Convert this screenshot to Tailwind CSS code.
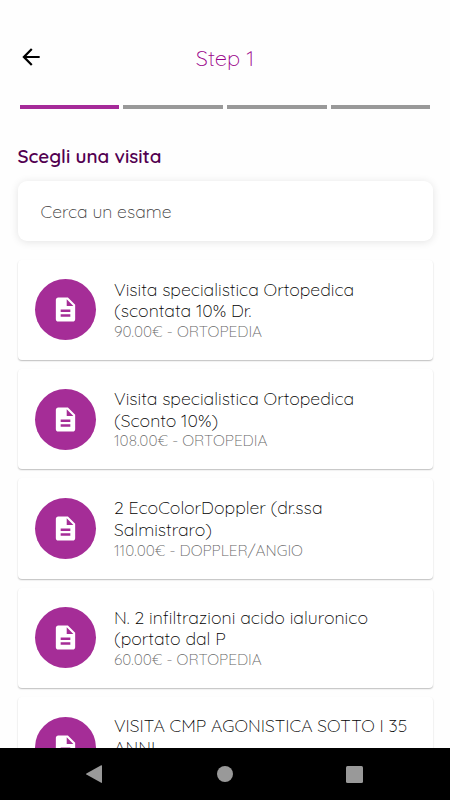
<!DOCTYPE html>
<html lang="it">
<head>
<meta charset="utf-8">
<meta name="viewport" content="width=device-width, initial-scale=1">
<title>Step 1</title>
<script src="https://cdn.jsdelivr.net/npm/@tailwindcss/browser@4"></script>
</head>
<body class="h-[800px] w-[450px] overflow-hidden bg-[#fefefe] font-['Quicksand','Inter',sans-serif] font-light text-black">
<svg class="hidden">
  <symbol id="doc" viewBox="0 0 24 24"><path fill="currentColor" d="M14 2H6c-1.100 0-1.990.9-1.990 2L4 20c0 1.100.89 2 1.990 2H18c1.100 0 2-.9 2-2V8l-6-6zm2 16H8v-2h8v2zm0-4H8v-2h8v2zm-3-5V3.500L18.500 9H13z"/></symbol>
</svg>
<div class="flex h-full flex-col">
  <header class="mt-9 grid h-[42px] shrink-0 grid-cols-[60px_1fr_60px] items-center">
    <svg class="ml-[17.500px] size-[26px]" viewBox="0 0 24 24"><path d="M20 11H7.830l5.590-5.590L12 4l-8 8 8 8 1.410-1.410L7.830 13H20v-2z"/></svg>
    <h1 class="pt-0.5 text-center text-[22px] text-[#990089]">Step 1</h1>
  </header>
  <div class="mt-[27px] grid shrink-0 grid-cols-4 gap-1 px-[19.700px]">
    <div class="h-[4px] bg-[#a52a99]"></div>
    <div class="h-[4px] bg-[#999]"></div>
    <div class="h-[4px] bg-[#999]"></div>
    <div class="h-[4px] bg-[#999]"></div>
  </div>
  <main class="flex min-h-0 flex-1 flex-col overflow-hidden px-[17.500px] pt-[35px]">
    <h2 class="h-6 shrink-0 text-[18.850px] leading-6 font-semibold text-[#520050]">Scegli una visita</h2>
    <div class="mt-[13px] flex h-[60px] shrink-0 items-center rounded-[9px] bg-white px-[23px] text-[17.600px] text-[#3a3a3a] shadow-[0_1px_8px_rgba(0,0,0,0.11)]"><span>Cerca un esame</span></div>
    <ul class="mt-[18.500px] flex flex-col gap-[9px]">
      <li class="flex h-[100.400px] shrink-0 items-center gap-[18px] rounded-[4px] bg-white pl-[17.500px] shadow-[0_1px_1.500px_rgba(0,0,0,0.26)]">
        <div class="flex size-[61px] items-center justify-center rounded-full bg-[#a52d97] text-white"><svg class="size-[29px]"><use href="#doc"/></svg></div>
        <div class="pt-px text-[17.700px] leading-[21.600px] whitespace-nowrap">
          <p>Visita specialistica Ortopedica</p>
          <p>(scontata 10% Dr.</p>
          <p class="text-[15.400px] leading-5 text-[#666]">90.00€ - ORTOPEDIA</p>
        </div>
      </li>
      <li class="flex h-[100.400px] shrink-0 items-center gap-[18px] rounded-[4px] bg-white pl-[17.500px] shadow-[0_1px_1.500px_rgba(0,0,0,0.26)]">
        <div class="flex size-[61px] items-center justify-center rounded-full bg-[#a52d97] text-white"><svg class="size-[29px]"><use href="#doc"/></svg></div>
        <div class="pt-px text-[17.700px] leading-[21.600px] whitespace-nowrap">
          <p>Visita specialistica Ortopedica</p>
          <p>(Sconto 10%)</p>
          <p class="text-[15.400px] leading-5 text-[#666]">108.00€ - ORTOPEDIA</p>
        </div>
      </li>
      <li class="flex h-[100.400px] shrink-0 items-center gap-[18px] rounded-[4px] bg-white pl-[17.500px] shadow-[0_1px_1.500px_rgba(0,0,0,0.26)]">
        <div class="flex size-[61px] items-center justify-center rounded-full bg-[#a52d97] text-white"><svg class="size-[29px]"><use href="#doc"/></svg></div>
        <div class="pt-px text-[17.700px] leading-[21.600px] whitespace-nowrap">
          <p>2 EcoColorDoppler (dr.ssa</p>
          <p>Salmistraro)</p>
          <p class="text-[15.400px] leading-5 text-[#666]">110.00€ - DOPPLER/ANGIO</p>
        </div>
      </li>
      <li class="flex h-[100.400px] shrink-0 items-center gap-[18px] rounded-[4px] bg-white pl-[17.500px] shadow-[0_1px_1.500px_rgba(0,0,0,0.26)]">
        <div class="flex size-[61px] items-center justify-center rounded-full bg-[#a52d97] text-white"><svg class="size-[29px]"><use href="#doc"/></svg></div>
        <div class="pt-px text-[17.700px] leading-[21.600px] whitespace-nowrap">
          <p class="tracking-[0.030px]">N. 2 infiltrazioni acido ialuronico</p>
          <p>(portato dal P</p>
          <p class="text-[15.400px] leading-5 text-[#666]">60.00€ - ORTOPEDIA</p>
        </div>
      </li>
      <li class="flex h-[100.400px] shrink-0 items-center gap-[18px] rounded-[4px] bg-white pl-[17.500px] shadow-[0_1px_1.500px_rgba(0,0,0,0.26)]">
        <div class="flex size-[61px] items-center justify-center rounded-full bg-[#a52d97] text-white"><svg class="size-[29px]"><use href="#doc"/></svg></div>
        <div class="h-[64px] text-[17.600px] leading-[21.600px] whitespace-nowrap">
          <p>VISITA CMP AGONISTICA SOTTO I 35</p>
          <p>ANNI</p>
        </div>
      </li>
    </ul>
  </main>
  <nav class="flex h-[52px] shrink-0 items-center justify-between bg-black pr-[87px] pl-[86px] text-[#999]">
    <svg class="h-[18px] w-4" viewBox="0 0 16 18"><path fill="currentColor" d="M15.200.2Q16-.1 16 .8V17.200Q16 18.100 15.200 17.800L.4 9.600Q-.2 9 .4 8.400z"/></svg>
    <div class="ml-px size-4 rounded-full bg-[#999]"></div>
    <div class="size-[17px] rounded-[1.500px] bg-[#999]"></div>
  </nav>
</div>
</body>
</html>
